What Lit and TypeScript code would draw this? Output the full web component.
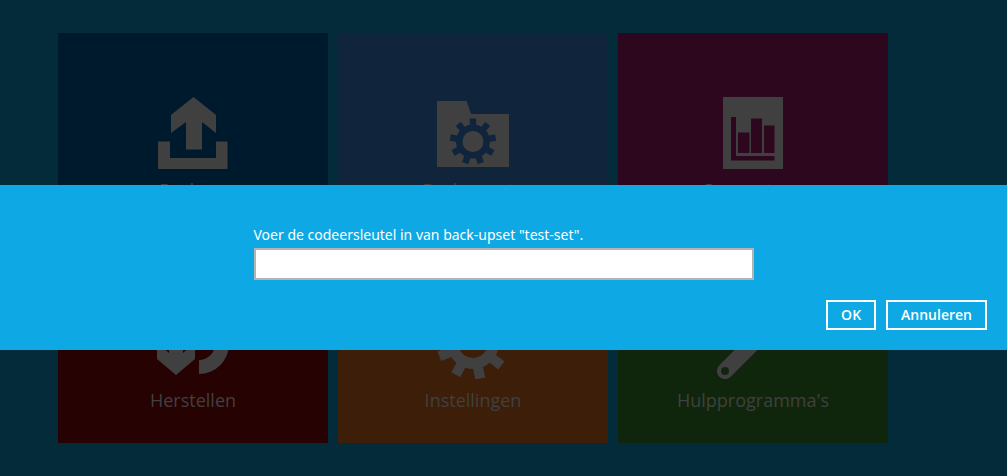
import { LitElement, html, svg, css } from "lit";
import { customElement } from "lit/decorators.js";

const gearPath = (
  cx: number,
  cy: number,
  outer: number,
  body: number,
  hole: number,
  start: number,
  tip: number,
): string => {
  const point = (r: number, deg: number) => {
    const a = (deg * Math.PI) / 180;
    return `${(cx + r * Math.cos(a)).toFixed(2)} ${(cy + r * Math.sin(a)).toFixed(2)}`;
  };
  const foot = tip + 3;
  const parts: string[] = [];
  for (let i = 0; i < 9; i++) {
    const a = start + i * 40;
    parts.push(
      `${i === 0 ? "M" : "L"}${point(body, a - foot)}`,
      `L${point(outer, a - tip)}`,
      `L${point(outer, a + tip)}`,
      `L${point(body, a + foot)}`,
      `A${body} ${body} 0 0 1 ${point(body, a + 40 - foot)}`,
    );
  }
  return `${parts.join("")}ZM${cx + hole} ${cy}A${hole} ${hole} 0 1 0 ${cx - hole} ${cy}A${hole} ${hole} 0 1 0 ${cx + hole} ${cy}Z`;
};

const icons = {
  backup: svg`<path d="M36.500 0 59 18V36L45 25V52.500H29V25L14 36V18ZM1 44.500H13V61H59V44.500H70.500V72H1Z"/>`,
  sets: svg`<path fill-rule="evenodd" d="M0 4H29.500L34 17H72V70H0Z${gearPath(36, 44.5, 23.2, 17, 10.5, 30, 8)}"/>`,
  report: svg`<path fill-rule="evenodd" d="M6 0H66V72H6ZM14 20V63.500H57.500V59H19V20ZM21 35.500V56H32.500V35.500ZM34 21.500V56H45V21.500ZM47 28.500V56H57.500V28.500Z"/>`,
  restore: svg`<path d="M0 35 12 46V18H26V46L38 35V52L19 68 0 52ZM42 67V53A16 16 0 0 0 42 21V7A30 30 0 0 1 42 67Z"/>`,
  settings: svg`<path fill-rule="evenodd" d="${gearPath(36, 36, 36.5, 26, 15, 38.5, 8)}"/>`,
  tools: svg`<path fill-rule="evenodd" d="M2.300 58.300 42 18.600A18 18 0 0 1 64 1L54 11 60 17 70 7A18 18 0 0 1 53 30.400L13.700 69.700A8 8 0 0 1 2.300 58.300ZM12 64A4 4 0 1 0 4 64A4 4 0 1 0 12 64Z"/>`,
};

const tiles = [
  { label: "Back-up", tone: "navy", icon: icons.backup },
  { label: "Back-upsets", tone: "slate", icon: icons.sets },
  { label: "Rapportage", tone: "plum", icon: icons.report },
  { label: "Herstellen", tone: "red", icon: icons.restore },
  { label: "Instellingen", tone: "orange", icon: icons.settings },
  { label: "Hulpprogramma's", tone: "green", icon: icons.tools },
];

@customElement("app-root")
export class AppRoot extends LitElement {
  static styles = css`
    :host {
      display: block;
      position: relative;
      min-height: 100vh;
      box-sizing: border-box;
      padding: 33px 58px;
      overflow: hidden;
      background: #032b39;
      font-family: "Open Sans", "Noto Sans", sans-serif;
    }
    .tiles {
      display: grid;
      grid-template-columns: repeat(auto-fill, 270px);
      gap: 10px;
    }
    .tile {
      display: flex;
      flex-direction: column;
      align-items: center;
      gap: 8px;
      height: 200px;
      padding: 64px 0 0;
      border: 0;
      box-sizing: border-box;
      color: #404040;
      font: 18px/26px "Open Sans", "Noto Sans", sans-serif;
    }
    .icon {
      width: 72px;
      height: 72px;
      fill: currentColor;
    }
    .navy { background: #001a2d; }
    .slate { background: #10253c; }
    .plum { background: #2d071d; }
    .red { background: #260202; }
    .orange { background: #3d1e08; }
    .green { background: #10260c; }
    .overlay {
      position: absolute;
      inset: 0;
      display: flex;
      align-items: center;
      box-sizing: border-box;
      padding-top: 59px;
    }
    .dialog {
      width: 100%;
      box-sizing: border-box;
      padding: 40px 20px 20px;
      background: #0ea9e4;
      color: #fff;
    }
    .field {
      display: flex;
      flex-direction: column;
      gap: 3px;
      max-width: 500px;
      margin: 0 auto 20px;
      font: 14px/20px "Noto Sans", "Open Sans", sans-serif;
    }
    .key {
      height: 32px;
      box-sizing: border-box;
      padding: 0 8px;
      border: 2px solid #b3b3b3;
      border-radius: 0;
      background: #fff;
      font: inherit;
      outline: none;
    }
    .actions {
      display: flex;
      justify-content: flex-end;
      gap: 10px;
    }
    .button {
      height: 30px;
      padding: 0 13px;
      border: 2px solid #fff;
      background: transparent;
      color: #fff;
      font: 600 14px/20px "Open Sans", "Noto Sans", sans-serif;
    }
  `;

  render() {
    return html`
      <main class="tiles">
        ${tiles.map(
          (t) => html`
            <button class="tile ${t.tone}" type="button">
              <svg class="icon" viewBox="0 0 72 72" aria-hidden="true">${t.icon}</svg>
              <span>${t.label}</span>
            </button>
          `,
        )}
      </main>
      <div class="overlay">
        <form class="dialog" role="dialog" aria-modal="true" @submit=${(e: Event) => e.preventDefault()}>
          <div class="field">
            <label for="key">Voer de codeersleutel in van back-upset "test-set".</label>
            <input class="key" id="key" type="password" />
          </div>
          <div class="actions">
            <button class="button" type="submit">OK</button>
            <button class="button" type="button">Annuleren</button>
          </div>
        </form>
      </div>
    `;
  }
}
